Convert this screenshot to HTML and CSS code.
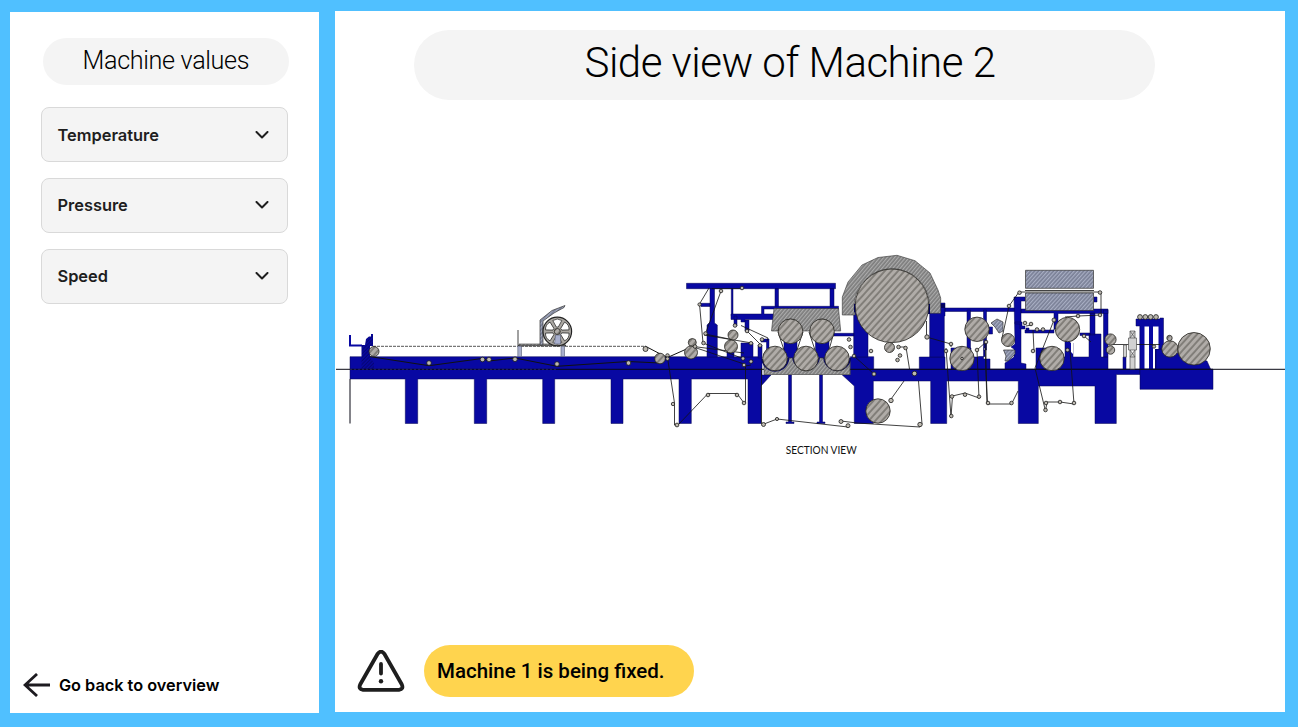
FILE: index.html
```html
<!DOCTYPE html>
<html lang="en">
<head>
<meta charset="utf-8">
<title>Side view of Machine 2</title>
<link rel="stylesheet" href="styles.css">
</head>
<body>
<aside class="sidebar">
  <h2 class="side-title">Machine values</h2>
  <nav class="values">
    <button class="value"><span>Temperature</span><svg class="chevron" viewBox="0 0 14 8"><path d="M1.5 1 7 6.5 12.5 1"/></svg></button>
    <button class="value"><span>Pressure</span><svg class="chevron" viewBox="0 0 14 8"><path d="M1.5 1 7 6.5 12.5 1"/></svg></button>
    <button class="value"><span>Speed</span><svg class="chevron" viewBox="0 0 14 8"><path d="M1.5 1 7 6.5 12.5 1"/></svg></button>
  </nav>
  <a class="back"><svg class="arrow" viewBox="0 0 28 24"><path d="M27 12H2M14 1 2 12 14 23"/></svg><span>Go back to overview</span></a>
</aside>
<main class="stage">
  <h1 class="title"><span>Side view of Machine 2</span></h1>
  <svg class="machine" viewBox="335 250 950 210" role="img" aria-label="Section view">
    <defs>
      <pattern id="hr" width="4.9" height="4.9" patternUnits="userSpaceOnUse" patternTransform="rotate(42)"><rect width="4.9" height="4.9" fill="#b0aca8"/><path d="M1 0V4.9" stroke="#35322d" stroke-width=".75"/></pattern>
      <pattern id="hg" width="2.8" height="2.8" patternUnits="userSpaceOnUse" patternTransform="rotate(40)"><rect width="2.8" height="2.8" fill="#acacac"/><path d="M1 0V2.8" stroke="#333" stroke-width=".65"/></pattern>
      <pattern id="hb" width="2.8" height="2.8" patternUnits="userSpaceOnUse" patternTransform="rotate(42)"><rect width="2.8" height="2.8" fill="#a9afc4"/><path d="M1 0V2.8" stroke="#30374f" stroke-width=".65"/></pattern>
      <pattern id="hn" width="2.5" height="2.5" patternUnits="userSpaceOnUse" patternTransform="rotate(45)"><rect width="2.5" height="2.5" fill="#0808a2"/><path d="M1 0V2.5" stroke="#02024a" stroke-width=".6"/></pattern>
    </defs>

    <!-- bed and legs -->
    <g class="steel">
      <path d="M350 356.7H762V375H771L761 386V423.5H748V379H691.3V423.5H679V379H623V423.5H611V379H554.7V423.5H542.7V379H486.7V423.5H474.3V379H417.7V423.5H405.3V379H350Z"/>
      <path d="M850.3 356.7H873.7V369H919.3V357H945V369H1140V374.5H1116.3V423.5H1095V386H1038.3V423.5H1018.3V381H946.7V423.5H930.7V381H873.3V423.5H854.3V386L842.3 375H850.3Z"/>
      <path d="M1140 369H1213V389.3H1140Z"/>
      <!-- first tower -->
      <path d="M686.5 283.3H835.5V288.7H686.5ZM710 288.7H714.5V323L717.3 325V357H707V325L710 322ZM701 303.3H710V306.5H701ZM731.3 288.7H733V316H731.3ZM775 288.7H778.5V307H775ZM830 288.7H834V308H830Z"/>
      <path d="M761.5 306.3H838.5V309H764V314H774V319.5H745V322H741V319.5H731V314H761.5ZM745 320H749V331H745ZM734 316H737V326H734ZM741 343H753V357H741ZM727 351H734V357H727ZM758 345H762V358H758ZM761 339H769V350H766.5V342H761Z"/>
      <!-- drum pedestals -->
      <path d="M853.7 304H857V313L868 324V357H853.7ZM929.7 309H931V303H945V316H944.3V357H929.7ZM834 333.3H854V336H834ZM945 308H1018V311.5H945Z"/>
      <!-- middle tower -->
      <path d="M967 310H970.5V350H967ZM983.5 310H986.5V350H983.5ZM951 348H971V357H978.5V356.5H985V348H983.5V359H990V369H951ZM989 327H992.5V334H989ZM1014 297H1025V301H1021V363L1026 364V369H1005V363L1014 357V349L1011 347L1015 344ZM1021 309H1108V313.5H1058V329H1054V333H1025V330H1054V313H1021ZM1026 328H1029V331H1026ZM1036 348H1046V357H1065V341H1070V343H1073V357H1089V334H1101V357H1108V369H1036ZM1090 313H1095V335H1090ZM1094 297H1097V302H1094ZM1103.5 310H1108V357H1103.5ZM1080 333H1090V335.5H1080Z"/>
      <path d="M1015 324H1020V329H1025V326H1022V322H1015Z"/>
      <!-- right stand -->
      <path d="M1136 319H1160V318H1163.5V349H1156V369H1139.8V326H1136Z M1156 349H1162L1207 361 1210.5 369H1155.5V350Z M1123 357H1126V369H1123Z"/>
      <!-- supports below the trough -->
      <path d="M788.5 375H791.5V422H794V423.5H786V422H788.5ZM819.5 375H822.5V422H825V423.5H817V422H819.5ZM784 340H797V352L794 358H788L784 352ZM815.5 340H829V352L825 358H819L815.5 352Z"/>
    </g>
    <path class="open" d="M1144.5 326.5H1149V368.5H1144.5ZM1153 326.5H1158.5V349H1155V368.5H1153ZM1071 341H1073V354L1071 352Z"/>
    <path class="hn" d="M361.5 369V345H365L366 339L369 336.5H371V334H373V346H370V357L374 363V369Z"/>
    <path class="rail" d="M350 335V345.5H362"/>
    <path class="dark" d="M336 369.3H1285M350 379V423.5"/>
    <path class="faint" d="M350 369.3H557"/>

    <!-- left web -->
    <path class="web dashed" d="M373 346.3H645"/>
    <path class="web heavy" d="M370 356.6 429 365.7 482 358.5 489 361 515 358 557 366.3 628 361.5 660 363M645 346 667 357.5M667.5 357.5 691 347"/>
    <path class="web" d="M692 346.3 744 353M667.5 357.5 674.5 403V425H678L708 393.5H737L744 403M518 330V345.5M517.8 345.5H566"/>
    <path class="blue-gray" d="M517.8 346H521.5V356.5H517.8ZM561 346H564.5V356.5H561Z"/>
    <path class="hg" d="M519 344H565V345.8H519Z"/>
    <path class="hb" d="M540 345V320L552 310.5 565 305.5 564 307.5 554 313 543 321V345Z"/>
    <circle class="wheel" cx="557.3" cy="331.5" r="14.3"/>
    <g class="cutouts">
      <path id="cut" d="M556.3 327 552.8 320.5Q557.3 317.5 561.8 320.5L558.3 327Z"/>
      <use href="#cut" transform="rotate(60 557.3 331.5)"/><use href="#cut" transform="rotate(120 557.3 331.5)"/><use href="#cut" transform="rotate(180 557.3 331.5)"/><use href="#cut" transform="rotate(240 557.3 331.5)"/><use href="#cut" transform="rotate(300 557.3 331.5)"/>
    </g>
    <path class="blue-gray" d="M555.5 335H560.5V344H554.5Z"/>
    <circle class="hr" cx="557.3" cy="331.5" r="3"/>

    <!-- web through first tower -->
    <path class="web" d="M709 288 699.5 304 703 343 744 359M721 291 705.5 333.5 704 335 752 343M692 346.5 744 364M741 325.5 768 338 767 341M747 331 760 344M751 365 745.5 366V403M705 334 734 340M761.5 368V424H764L777 419 848 427"/>
    <path class="web" d="M712 288.6H743"/>

    <!-- hoods and troughs -->
    <path class="hg" d="M774 308.5H838.5L840.7 331H833Q832 319 822 319Q812 319 811 331H801Q800 319 790.5 319Q780 319 778 331H771.5Z"/>
    <path class="hg" d="M764 361Q767 371 775 371Q786 371 788 358H794Q797 371 806 371Q816 371 818 358H826Q829 371 837 371Q847 371 850 360V374.5H764Z"/>
    <path class="trough" d="M762.5 359A12.8 12.8 0 0 0 788 358M793.5 358A12.8 12.8 0 0 0 818.7 358M824.5 358A12.8 12.8 0 0 0 850 358"/>
    <path class="web" d="M778 332 784 350M803 332 797 350M809 332 815 350M834 332 829 350"/>
    <path class="hg" d="M842.3 315V297L848 282 862 265 878 257.5 897 255.3 915 260.7 930 273 938 290 940.7 298V313.3H929A37.7 37.7 0 1 0 855.2 315Z"/>
    <path class="joint" d="M854 304H857V312H854ZM928 304H930V314H928ZM941 304H945V308H941Z"/>

    <!-- web below the drum and middle tower -->
    <path class="web" d="M926.5 321V337L951 344V347M854 356 874 374M898 347H906L909.5 369M904 381 890 400.5M841 421 857 423 920 427 922 424 918.5 381M946 348 951 417 952.5 396 965 393 979 398 977 350 986 342M986 342V369L987.5 404H1011.5L1018 391M1019 292H1101V315L1078 316 1065 317M1019 292 1009 306 1002 338M985 342 987 404M1033 330 1034 351M1054 320 1035 368 1045.5 411 1047 402H1060L1074 404 1070 350M1026 326 1032 325M1084 336 1091 342M1110 344.5H1160"/>
    <path class="web" d="M1025 290.5H1094"/>

    <!-- heaters -->
    <path class="hb" d="M1025.5 270.3H1093.5V288.3H1025.5ZM1025.5 293H1093.5V310.5H1025.5Z"/>
    <path class="hb" d="M991 323 997 319 1003 322V331L999 333 995 327ZM1003.5 350H1015V354L1008 361H1005L1006 356Z"/>

    <g class="hr">
      <circle cx="374" cy="351.5" r="5"/><circle cx="660" cy="358.5" r="5.3"/><circle cx="692.3" cy="342.5" r="4"/><circle cx="691" cy="352.5" r="6.5"/>
      <circle cx="733" cy="335" r="5"/><circle cx="731" cy="346.5" r="6.5"/>
      <circle cx="790.5" cy="331.3" r="12.3"/><circle cx="822" cy="331.3" r="12.3"/>
      <circle cx="775" cy="358.5" r="12.3"/><circle cx="806" cy="358.5" r="12.3"/><circle cx="837" cy="358.5" r="12.3"/>
      <circle cx="892" cy="305.8" r="36.8"/><circle cx="878" cy="411" r="12.2"/><circle cx="889.5" cy="347.5" r="5"/>
      <circle cx="977" cy="329.3" r="12.2"/><circle cx="962" cy="358.5" r="12.2"/><circle cx="1008" cy="340" r="6.5"/>
      <circle cx="1067.5" cy="329.5" r="12.2"/><circle cx="1052" cy="358.5" r="12.2"/>
      <circle cx="1110.5" cy="339.5" r="5.6"/><circle cx="1110.5" cy="350" r="4.2"/>
      <circle cx="1170" cy="349" r="8.2"/><circle cx="1194" cy="348.8" r="16.3"/><circle cx="1169.5" cy="338" r="2.7"/>
    </g>
    <g class="pin">
      <circle cx="429" cy="363" r="2.3"/><circle cx="482.5" cy="359.5" r="2.3"/><circle cx="489" cy="359.5" r="2.3"/><circle cx="515" cy="359.3" r="2.3"/><circle cx="557" cy="364" r="2.3"/><circle cx="628.5" cy="363" r="2.3"/><circle cx="645.5" cy="349" r="2.5"/>
      <circle cx="667.5" cy="355.5" r="1.8"/><circle cx="667.5" cy="358.7" r="1.8"/><circle cx="695" cy="346.5" r="1.8"/><circle cx="673" cy="404" r="1.7"/><circle cx="677" cy="425" r="1.9"/>
      <circle cx="721" cy="291" r="1.8"/><circle cx="742" cy="288" r="1.8"/><circle cx="699.5" cy="304.5" r="1.6"/><circle cx="705.5" cy="333.5" r="1.8"/><circle cx="703.5" cy="343" r="1.8"/><circle cx="735" cy="325.5" r="1.8"/><circle cx="747" cy="331" r="1.8"/><circle cx="762" cy="339.5" r="1.8"/><circle cx="760" cy="345.5" r="1.8"/><circle cx="751" cy="343.3" r="1.8"/><circle cx="743" cy="358.5" r="1.8"/><circle cx="751" cy="361.5" r="1.8"/><circle cx="744" cy="365" r="1.8"/>
      <circle cx="708" cy="395" r="1.8"/><circle cx="737" cy="395" r="1.8"/><circle cx="744" cy="403" r="1.8"/><circle cx="763.5" cy="424.5" r="2"/><circle cx="777" cy="419" r="1.6"/>
      <circle cx="849" cy="339.5" r="1.8"/><circle cx="850.5" cy="347" r="1.8"/><circle cx="871" cy="351" r="1.8"/><circle cx="854" cy="356" r="1.8"/><circle cx="874" cy="374" r="2"/><circle cx="841" cy="421.5" r="2"/><circle cx="848" cy="425.7" r="2"/>
      <circle cx="898.5" cy="347" r="1.8"/><circle cx="905.5" cy="348" r="1.8"/><circle cx="900" cy="355.5" r="1.8"/><circle cx="897.5" cy="360" r="1.8"/><circle cx="927" cy="337" r="2.2"/><circle cx="951" cy="344" r="1.8"/><circle cx="946" cy="351" r="1.8"/><circle cx="914.5" cy="373.5" r="2.3"/><circle cx="891" cy="400.5" r="2.2"/><circle cx="920" cy="424.5" r="2.2"/>
      <circle cx="952" cy="396.5" r="1.8"/><circle cx="951.3" cy="416" r="1.8"/><circle cx="965" cy="394.7" r="1.8"/><circle cx="979" cy="396.7" r="1.8"/><circle cx="986" cy="342" r="1.8"/><circle cx="977" cy="350" r="1.8"/><circle cx="988" cy="403" r="1.8"/><circle cx="1011.5" cy="403" r="1.8"/><circle cx="1009" cy="306" r="1.8"/><circle cx="1019.5" cy="292.7" r="1.8"/><circle cx="1025" cy="323" r="1.8"/><circle cx="1031" cy="324" r="1.8"/><circle cx="962" cy="358.5" r="1.3"/>
      <circle cx="1054" cy="320" r="2"/><circle cx="1078" cy="316" r="1.8"/><circle cx="1100" cy="292.5" r="1.8"/><circle cx="1100" cy="315" r="1.8"/><circle cx="1046" cy="403" r="1.8"/><circle cx="1060" cy="402" r="1.8"/><circle cx="1074" cy="403" r="1.8"/><circle cx="1045.5" cy="410" r="1.8"/><circle cx="1037" cy="329.5" r="1.8"/><circle cx="1043" cy="329.5" r="1.8"/><circle cx="1033" cy="351" r="1.8"/><circle cx="1084" cy="336" r="1.8"/><circle cx="1067.5" cy="350" r="1.8"/>
      <circle cx="1140" cy="317" r="2.4"/><circle cx="1145.3" cy="317" r="2.4"/><circle cx="1150.6" cy="317" r="2.4"/><circle cx="1156" cy="317" r="2.4"/><circle cx="1154" cy="346.5" r="1.7"/>
    </g>
    <path class="gauge" d="M1130 331H1135V338H1136.5V350H1135V369H1130V350H1128.5V338H1130ZM1130 338H1135M1130 350H1135M1130 331 1135 338M1135 331 1130 338M1130 350 1135 357 1130 357 1135 350M1123.5 345H1126.5V357H1123.5Z"/>
    <text class="caption" x="785.7" y="453.8" textLength="71" lengthAdjust="spacingAndGlyphs">SECTION VIEW</text>
  </svg>
  <div class="alert">
    <svg class="warning" viewBox="0 0 48 42"><path d="M20.4 4.2Q24 -1 27.6 4.2L44.7 34.2Q47 39.3 42 39.8H6Q1 39.3 3.3 34.2ZM24 14V23.5"/><circle cx="24" cy="31.3" r="2.2"/></svg>
    <p class="message">Machine 1 is being fixed.</p>
  </div>
</main>
</body>
</html>
```

FILE: styles.css
```css
* { box-sizing: border-box; }
body {
  margin: 0;
  height: 727px;
  padding: 11px 13px 14px 10.4px;
  display: flex;
  gap: 16.4px;
  overflow: hidden;
  background: #50c0ff;
  font-family: Roboto, sans-serif;
  color: #000;
}
.sidebar {
  width: 308.2px;
  height: 701px;
  margin-top: 1px;
  padding: 25.5px 30.5px 14.5px;
  display: flex;
  flex-direction: column;
  background: #fff;
}
.side-title {
  margin: 0 0 0 2px;
  width: 246px;
  height: 47px;
  border-radius: 24px;
  background: #f4f4f4;
  font-size: 25.2px;
  line-height: 46px;
  font-weight: 300;
  letter-spacing: -0.35px;
  text-align: center;
  white-space: nowrap;
}
.values {
  margin-top: 22.5px;
  display: flex;
  flex-direction: column;
  gap: 15.8px;
}
.value {
  width: 247px;
  height: 55px;
  padding: 0 18.2px 0 15.6px;
  display: flex;
  align-items: center;
  justify-content: space-between;
  border: 1px solid #d9d9d9;
  border-radius: 8px;
  background: #f4f4f4;
  color: #1e1e1e;
  font: 600 16.4px Inter, sans-serif;
}
.chevron { width: 14px; height: 8px; }
.chevron path { fill: none; stroke: #1e1e1e; stroke-width: 2; stroke-linecap: round; stroke-linejoin: round; }
.back {
  margin: auto 0 0 -17.5px;
  display: flex;
  align-items: center;
  gap: 7.5px;
  height: 28px;
  font: 600 16.3px Inter, sans-serif;
  white-space: nowrap;
}
.arrow { width: 28px; height: 24px; }
.arrow path { fill: none; stroke: #1d1b20; stroke-width: 2.8; }
.stage {
  width: 950px;
  height: 701px;
  display: flex;
  flex-direction: column;
  background: #fff;
}
.title {
  margin: 19px 0 0 79px;
  padding-left: 11px;
  width: 741px;
  height: 70px;
  border-radius: 35px;
  background: #f4f4f4;
  font-size: 42px;
  line-height: 65px;
  font-weight: 300;
  letter-spacing: -0.5px;
  text-align: center;
  white-space: nowrap;
}
.machine { display: block; width: 950px; height: 210px; margin-top: 150px; flex: none; }
.alert { display: flex; align-items: center; gap: 19px; margin: 185px 0 0 22px; }
.warning { width: 48px; height: 42px; }
.warning path { fill: none; stroke: #1e1e1e; stroke-width: 3.8; stroke-linecap: round; stroke-linejoin: round; }
.warning circle { fill: #1e1e1e; }
.message {
  margin: 0;
  width: 270px;
  height: 52px;
  padding-left: 13px;
  border-radius: 26px;
  background: #ffd44e;
  font-size: 20.5px;
  line-height: 53px;
  font-weight: 500;
  white-space: nowrap;
}
.steel { fill: #0808a2; stroke: #050552; stroke-width: .5; }
.open { fill: #fff; }
.hn { fill: url(#hn); }
.hr { fill: url(#hr); stroke: #25231f; stroke-width: .8; }
.hg { fill: url(#hg); stroke: #333; stroke-width: .6; }
.hb { fill: url(#hb); stroke: #333; stroke-width: .7; }
.rail { fill: none; stroke: #0808a2; stroke-width: 2; }
.dark { fill: none; stroke: #090914; stroke-width: 1; }
.faint { fill: none; stroke: #33336b; stroke-width: .7; stroke-dasharray: 2 2; }
.web { fill: none; stroke: #111; stroke-width: .8; }
.heavy { stroke-width: 1; }
.dashed { stroke-dasharray: 3 1; stroke-width: 1; stroke: #555; }
.trough { fill: none; stroke: #050566; stroke-width: 2.6; }
.joint { fill: #02025f; }
.blue-gray { fill: #a8afcd; stroke: #555b72; stroke-width: .6; }
.wheel { fill: #aaa7a2; stroke: #222; stroke-width: 1.2; }
.cutouts { fill: #fff; stroke: #222; stroke-width: .7; }
.pin circle { fill: #bdb9b0; stroke: #1d1d1d; stroke-width: .8; }
.gauge { fill: #d2d2d2; stroke: #555; stroke-width: .7; }
.caption { font: 400 10.5px Lato, sans-serif; fill: #111; }
```
